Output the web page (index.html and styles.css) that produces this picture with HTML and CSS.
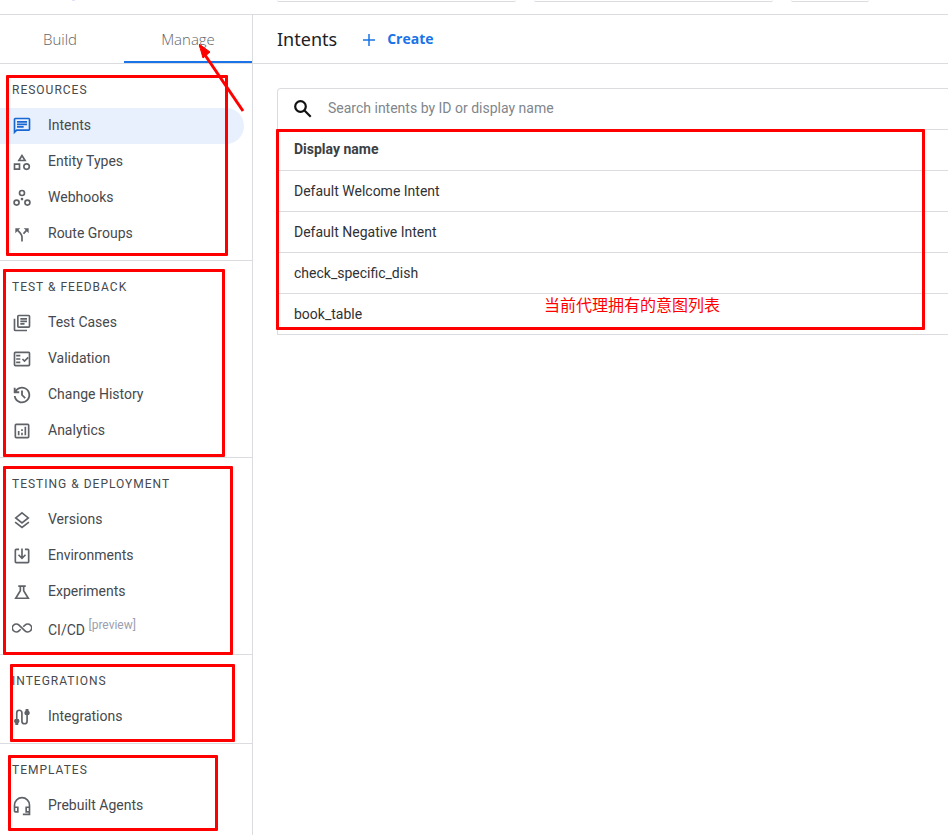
FILE: index.html
```html
<!DOCTYPE html>
<html lang="en">
<head>
<meta charset="utf-8">
<title>Intents</title>
<link rel="stylesheet" href="styles.css">
</head>
<body>
<header class="topbar">
  <span class="topbar-mark"></span>
  <span class="topbar-field"></span>
  <span class="topbar-field"></span>
  <span class="topbar-field topbar-field-small"></span>
</header>
<div class="shell">
  <aside class="sidebar">
    <div class="tabs" role="tablist">
      <button class="tab" role="tab" aria-selected="false">Build</button>
      <button class="tab tab-active" role="tab" aria-selected="true">Manage</button>
    </div>
    <nav>
      <section class="group">
        <h2 class="group-title">Resources</h2>
        <a class="item item-active" href="#"><svg class="icon" viewBox="0 0 24 24"><path d="M4 4h16v12H5.17L4 17.17V4m0-2c-1.1 0-2 .9-2 2v18l4-4h14c1.1 0 2-.9 2-2V4c0-1.100-.9-2-2-2H4zm2 10h8v2H6v-2zm0-3h12v2H6V9zm0-3h12v2H6V6z"/></svg>Intents</a>
        <a class="item" href="#"><svg class="icon line" viewBox="0 0 24 24"><path d="M12 4.200 8.300 10.200h7.400zM3 14.500h6V20.500H3z"/><circle cx="17.500" cy="17.500" r="3.300"/></svg>Entity Types</a>
        <a class="item" href="#"><svg class="icon line" viewBox="0 0 24 24"><circle cx="12" cy="6" r="3"/><circle cx="5.500" cy="17.500" r="3"/><circle cx="18.500" cy="17.500" r="3"/><circle class="solid" cx="12" cy="13.300" r="1.600"/></svg>Webhooks</a>
        <a class="item" href="#"><svg class="icon line" viewBox="0 0 24 24"><path d="M12 21v-5.500c0-3-1.500-4-6-8.500M13.800 11.800c.8-1.200 2-2.500 4.200-4.800"/><path class="solid" d="M4 5h6L8 7l-.8.800-.7.700L6 9l-2 2zM20 5h-6l2 2 .8.800.7.700.5.500 2 2z"/></svg>Route Groups</a>
      </section>
      <section class="group">
        <h2 class="group-title">Test &amp; Feedback</h2>
        <a class="item" href="#"><svg class="icon line" viewBox="0 0 24 24"><rect x="7" y="3" width="14" height="14" rx="1"/><path d="M3 7v13c0 .6.400 1 1 1h14M10 7h8M10 10h8M10 13h5"/></svg>Test Cases</a>
        <a class="item" href="#"><svg class="icon line" viewBox="0 0 24 24"><rect x="3" y="4" width="18" height="16" rx="1"/><path d="M5 8h5M5 12h5M5 16h5M12.500 12l2.500 2.500 4.500-4.500"/></svg>Validation</a>
        <a class="item" href="#"><svg class="icon" viewBox="0 0 24 24"><path d="M12 21c-4.600 0-8.400-3.500-8.900-8h2c.5 3.400 3.400 6 6.900 6 3.900 0 7-3.100 7-7s-3.100-7-7-7C9.900 5 7.700 6.100 6.300 8H9v2H3V4h2v2.400C6.700 4.200 9.300 3 12 3c5 0 9 4 9 9s-4 9-9 9zm2.800-4.800L11 12.400V7h2v4.600l3.200 3.200-1.400 1.400z" transform="translate(-1.200 -1.200) scale(1.100)"/></svg>Change History</a>
        <a class="item" href="#"><svg class="icon line" viewBox="0 0 24 24"><rect x="4" y="4" width="16" height="16" rx="1"/><path d="M8 12v5M12 14v3M12 10v2M16 7v10"/></svg>Analytics</a>
      </section>
      <section class="group">
        <h2 class="group-title">Testing &amp; Deployment</h2>
        <a class="item" href="#"><svg class="icon line" viewBox="0 0 24 24"><path d="m12 3.500 7.500 6-7.500 6-7.500-6zM3.700 14.500l8.300 6.300 8.300-6.300"/></svg>Versions</a>
        <a class="item" href="#"><svg class="icon line" viewBox="0 0 24 24"><path d="M8.500 4H5a1 1 0 0 0-1 1v14a1 1 0 0 0 1 1h14a1 1 0 0 0 1-1V5a1 1 0 0 0-1-1h-3.500M12 3v11M7.800 10.500l4.200 4.200 4.200-4.200"/></svg>Environments</a>
        <a class="item" href="#"><svg class="icon line" viewBox="0 0 24 24"><path d="M7.500 5h9M10 5v5.500L4.500 19.500h15L14 10.500V5"/></svg>Experiments</a>
        <a class="item" href="#"><svg class="icon line" viewBox="0 0 24 24"><path d="M10.500 13.500 8.400 15.400a4.700 4.700 0 1 1 0-6.800L15.600 15.400a4.700 4.700 0 1 0 0-6.800L13.500 10.500"/></svg><span class="item-text">CI/CD <sup class="preview">[preview]</sup></span></a>
      </section>
      <section class="group">
        <h2 class="group-title">Integrations</h2>
        <a class="item" href="#"><svg class="icon line" viewBox="0 0 24 24"><path d="M5.700 15V7a3.100 3.100 0 0 1 6.200 0v10a3.100 3.100 0 0 0 6.200 0V8"/><path class="solid" d="M3.500 14.500h4.400c1.300 1.300 1.400 3.300.2 4.500L7.500 19.700V21.500H4v-1.800L3.300 19c-1.200-1.200-1.100-3.200.2-4.500zM15.900 9.500h4.400c1.300-1.300 1.400-3.300.2-4.500l-.7-.7V2.500h-3.500v1.800l-.6.700c-1.200 1.200-1.100 3.200.2 4.500z"/></svg>Integrations</a>
      </section>
      <section class="group">
        <h2 class="group-title">Templates</h2>
        <a class="item" href="#"><svg class="icon line" viewBox="0 0 24 24"><path d="M3 18v-7a9 9 0 0 1 18 0v11h-8M3 13.500h4V19H4a1 1 0 0 1-1-1zM21 13.500h-4V19h4"/></svg>Prebuilt Agents</a>
      </section>
    </nav>
  </aside>
  <main class="main">
    <div class="heading">
      <h1 class="title">Intents</h1>
      <button class="create"><svg class="plus" viewBox="0 0 12 12"><path d="M6 0v12M0 6h12"/></svg>Create</button>
    </div>
    <div class="panel">
      <label class="search">
        <svg class="search-icon" viewBox="0 0 18 18"><circle cx="6.500" cy="6.500" r="5.300"/><path d="m10.500 10.500 6.200 6.200"/></svg>
        <input class="search-input" type="text" placeholder="Search intents by ID or display name" aria-label="Search intents">
      </label>
      <table class="intents">
        <thead><tr><th>Display name</th></tr></thead>
        <tbody>
          <tr><td>Default Welcome Intent</td></tr>
          <tr><td>Default Negative Intent</td></tr>
          <tr><td>check_specific_dish</td></tr>
          <tr><td>book_table</td></tr>
        </tbody>
      </table>
    </div>
  </main>
</div>
<div class="mark mark-resources"></div>
<div class="mark mark-feedback"></div>
<div class="mark mark-deployment"></div>
<div class="mark mark-integrations"></div>
<div class="mark mark-templates"></div>
<div class="mark mark-intents"></div>
<p class="note">当前代理拥有的意图列表</p>
<svg class="arrow" viewBox="0 0 48 70"><path class="arrow-line" d="M44 67 6 11"/><path class="arrow-head" d="M0 0 11 8 4 14z"/></svg>
</body>
</html>
```
FILE: styles.css
```css
* {
  box-sizing: border-box;
}

body {
  margin: 0;
  min-height: 100vh;
  display: flex;
  flex-direction: column;
  position: relative;
  overflow-x: hidden;
  background: #fff;
  color: #46494d;
  font: 14px/20px Roboto, sans-serif;
}

button {
  padding: 0;
  border: 0;
  background: none;
  font-family: "Open Sans", sans-serif;
  cursor: pointer;
}

/* Top bar */
.topbar {
  display: flex;
  align-items: flex-start;
  gap: 18px;
  height: 15px;
  border-bottom: 1px solid #dadce0;
}

.topbar-mark {
  width: 3px;
  height: 1px;
  margin-left: 72px;
  margin-right: 184px;
  background: #e4e2fb;
}

.topbar-field {
  width: 239px;
  height: 2px;
  border-bottom: 1px solid #dadce0;
  border-radius: 0 0 4px 4px;
}

.topbar-field-small {
  width: 78px;
}

.shell {
  flex: 1;
  display: flex;
}

/* Sidebar */
.sidebar {
  flex: none;
  width: 253px;
  border-right: 1px solid #dadce0;
}

.tabs {
  display: flex;
  justify-content: flex-end;
  height: 49px;
  border-bottom: 1px solid #dadce0;
}

.tab {
  flex: none;
  width: 128px;
  border: solid transparent;
  border-width: 2px 0;
  color: #5f6368;
  font-size: 15px;
  font-weight: 300;
}

.tab-active {
  border-bottom-color: #1a73e8;
}

.group {
  padding: 8px 8px 8px 0;
  border-bottom: 1px solid #dadce0;
}

.group:last-child {
  border-bottom: 0;
}

.group-title {
  margin: 0;
  padding-left: 12px;
  font-size: 12px;
  font-weight: 400;
  line-height: 36px;
  letter-spacing: 1px;
  text-transform: uppercase;
}

.item {
  display: flex;
  align-items: center;
  gap: 16px;
  height: 36px;
  padding: 0 0 2px 12px;
  border-radius: 0 18px 18px 0;
  color: #46494d;
  font-size: 14px;
  text-decoration: none;
}

.item-active {
  background: #e8f0fe;
}

.icon {
  flex: none;
  width: 20px;
  height: 20px;
  margin-top: 2px;
  fill: #5f6368;
}

.item-active .icon {
  fill: #1967d2;
}

.line {
  fill: none;
  stroke: #5f6368;
  stroke-width: 2;
}

.solid {
  fill: #5f6368;
  stroke: none;
}

.preview {
  color: #9aa0b0;
  font-size: 12px;
  line-height: 20px;
}

/* Main */
.main {
  flex: 1;
  min-width: 0;
  overflow: hidden;
}

.heading {
  display: flex;
  align-items: center;
  gap: 26px;
  height: 49px;
  padding-left: 24px;
  border-bottom: 1px solid #dadce0;
}

.title {
  margin: 0;
  color: #202124;
  font: 400 18px/28px "Noto Sans", sans-serif;
}

.create {
  display: flex;
  align-items: center;
  gap: 12px;
  color: #1a73e8;
  font-size: 14px;
  font-weight: 700;
  line-height: 20px;
}

.plus {
  width: 12px;
  height: 12px;
  margin-top: 2px;
  stroke: #1a73e8;
  stroke-width: 1.500;
}

.panel {
  margin: 24px -8px 0 24px;
  border: 1px solid #dadce0;
  border-bottom: 0;
  border-radius: 4px 4px 0 0;
}

.search {
  display: flex;
  align-items: center;
  gap: 16px;
  height: 41px;
  padding-left: 16px;
  border-bottom: 1px solid #dadce0;
}

.search-icon {
  width: 18px;
  height: 18px;
  fill: none;
  stroke: #111;
  stroke-width: 2.200;
}

.search-input {
  flex: 1;
  padding: 0 0 2px;
  border: 0;
  outline: 0;
  background: none;
  color: #3c4043;
  font: 14px/20px Roboto, sans-serif;
}

.search-input::placeholder {
  color: #80868b;
}

.intents {
  width: 100%;
  border-spacing: 0;
}

.intents th,
.intents td {
  height: 41px;
  padding: 0 16px;
  border-bottom: 1px solid #dadce0;
  color: #303134;
  text-align: left;
}

.intents th {
  padding-bottom: 2px;
  color: #3c4043;
  font-weight: 700;
}

/* Annotations drawn over the page */
.mark {
  position: absolute;
  border: 3px solid #f00;
  border-radius: 1px;
  pointer-events: none;
}

.mark-resources {
  left: 6px;
  top: 75px;
  width: 222px;
  height: 181px;
}

.mark-feedback {
  left: 3px;
  top: 269px;
  width: 222px;
  height: 188px;
}

.mark-deployment {
  left: 3px;
  top: 466px;
  width: 230px;
  height: 189px;
}

.mark-integrations {
  left: 10px;
  top: 664px;
  width: 225px;
  height: 78px;
}

.mark-templates {
  left: 8px;
  top: 755px;
  width: 210px;
  height: 76px;
}

.mark-intents {
  left: 276px;
  top: 129px;
  width: 649px;
  height: 201px;
}

.note {
  position: absolute;
  left: 544px;
  top: 292px;
  margin: 0;
  color: #f00;
  font: 16px/24px "Noto Sans CJK SC", sans-serif;
}

.arrow {
  position: absolute;
  left: 199px;
  top: 44px;
  width: 48px;
  height: 70px;
  pointer-events: none;
}

.arrow-line {
  stroke: #f00;
  stroke-width: 3;
}

.arrow-head {
  fill: #f00;
  stroke: #f00;
}
```
